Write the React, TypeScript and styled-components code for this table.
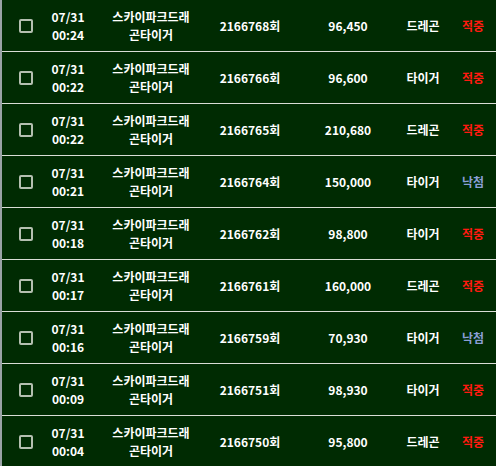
import styled, { createGlobalStyle } from 'styled-components';

const colors = {
  base: '#002b02',
  line: '#d9ddd6',
  edge: '#9aa3a6',
  text: '#ffffff',
  win: '#ff1a10',
  lose: '#8a9fd6',
  box: '#b4bfb0',
};

type Result = '적중' | '낙첨';

interface BetRow {
  date: string;
  time: string;
  round: string;
  amount: string;
  pick: string;
  result: Result;
}

const rows: BetRow[] = [
  { date: '07/31', time: '00:24', round: '2166768회', amount: '96,450', pick: '드레곤', result: '적중' },
  { date: '07/31', time: '00:22', round: '2166766회', amount: '96,600', pick: '타이거', result: '적중' },
  { date: '07/31', time: '00:22', round: '2166765회', amount: '210,680', pick: '드레곤', result: '적중' },
  { date: '07/31', time: '00:21', round: '2166764회', amount: '150,000', pick: '타이거', result: '낙첨' },
  { date: '07/31', time: '00:18', round: '2166762회', amount: '98,800', pick: '타이거', result: '적중' },
  { date: '07/31', time: '00:17', round: '2166761회', amount: '160,000', pick: '드레곤', result: '적중' },
  { date: '07/31', time: '00:16', round: '2166759회', amount: '70,930', pick: '타이거', result: '낙첨' },
  { date: '07/31', time: '00:09', round: '2166751회', amount: '98,930', pick: '타이거', result: '적중' },
  { date: '07/31', time: '00:04', round: '2166750회', amount: '95,800', pick: '드레곤', result: '적중' },
];

const GlobalStyle = createGlobalStyle`
  html, body {
    margin: 0;
    padding: 0;
    background-color: ${colors.base};
  }

  body {
    font-family: 'Noto Sans CJK KR', 'Noto Sans', sans-serif;
  }
`;

const StyledList = styled.div`
  width: 496px;
  height: 466px;
  overflow: hidden;
  box-sizing: border-box;

  border-left: 2px solid ${colors.edge};
  background-color: ${colors.base};
`;

const StyledRow = styled.div`
  display: grid;
  grid-template-columns: 48px 36px 114px 100px 96px 54px 46px;
  align-items: center;
  height: 51px;

  border-bottom: 1px solid ${colors.line};
`;

const StyledCell = styled.div<{ $indent?: number }>`
  display: flex;
  flex-direction: column;
  align-items: center;
  justify-content: center;
  padding-left: ${({ $indent = 0 }) => $indent}px;

  font-size: 12px;
  font-weight: 700;
  line-height: 18px;
  white-space: nowrap;
  text-align: center;

  color: ${colors.text};
`;

const StyledCheckbox = styled.span`
  display: block;
  width: 10px;
  height: 10px;

  border: 2px solid ${colors.box};
  border-radius: 2px;
`;

const StyledResult = styled(StyledCell)<{ $win: boolean }>`
  color: ${({ $win }) => ($win ? colors.win : colors.lose)};
`;

const BetListRow = ({ row }: { row: BetRow }): JSX.Element => (
  <StyledRow>
    <StyledCell>
      <StyledCheckbox />
    </StyledCell>
    <StyledCell>
      <span>{row.date}</span>
      <span>{row.time}</span>
    </StyledCell>
    <StyledCell $indent={16}>
      <span>스카이파크드래</span>
      <span>곤타이거</span>
    </StyledCell>
    <StyledCell>{row.round}</StyledCell>
    <StyledCell>{row.amount}</StyledCell>
    <StyledCell>{row.pick}</StyledCell>
    <StyledResult $win={row.result === '적중'}>{row.result}</StyledResult>
  </StyledRow>
);

const App = (): JSX.Element => (
  <>
    <GlobalStyle />
    <StyledList>
      {rows.map((row) => (
        <BetListRow key={row.round} row={row} />
      ))}
    </StyledList>
  </>
);

export default App;
